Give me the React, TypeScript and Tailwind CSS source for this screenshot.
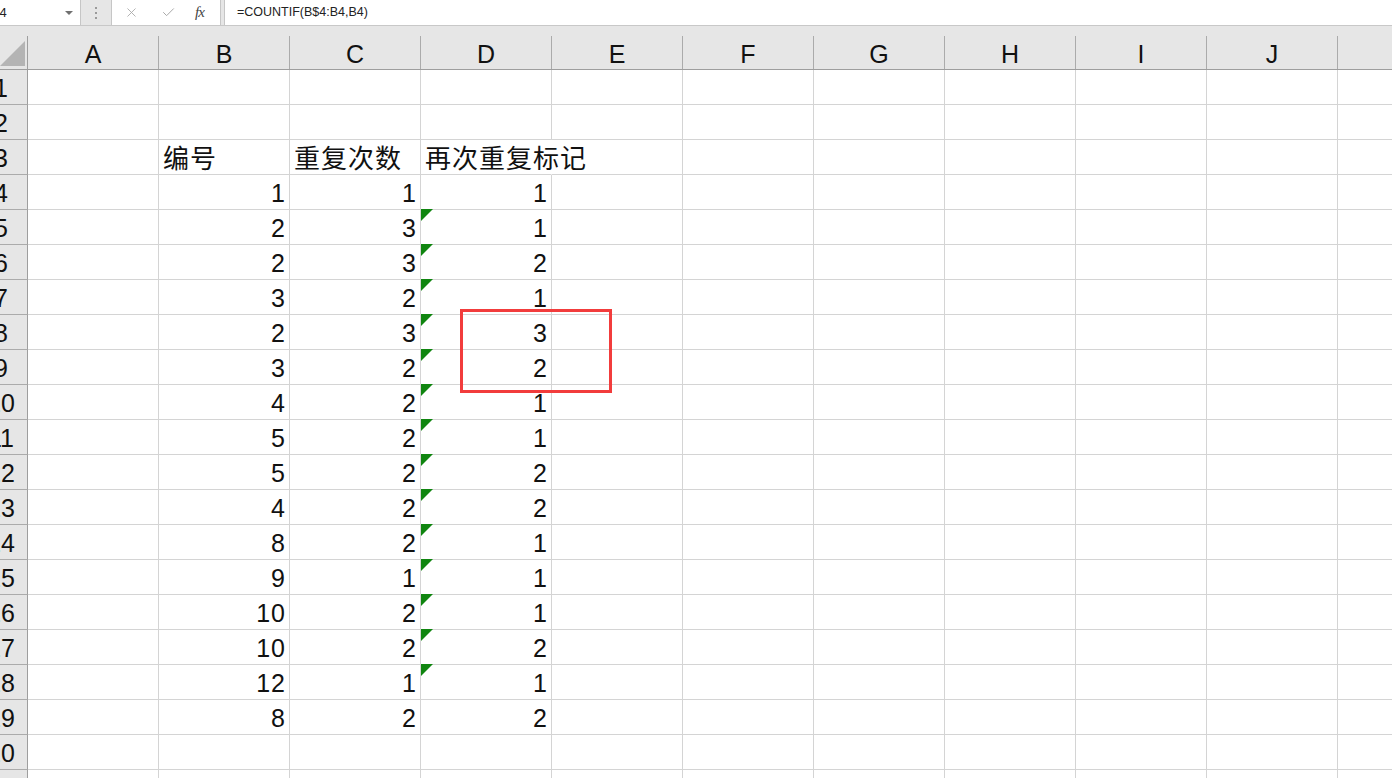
import { Check, X } from "lucide-react";

const COLS = ["A", "B", "C", "D", "E", "F", "G", "H", "I", "J", "K"];

// rows 4..19: 编号, 重复次数, 再次重复标记
const DATA: [number, number, number][] = [
  [1, 1, 1],
  [2, 3, 1],
  [2, 3, 2],
  [3, 2, 1],
  [2, 3, 3],
  [3, 2, 2],
  [4, 2, 1],
  [5, 2, 1],
  [5, 2, 2],
  [4, 2, 2],
  [8, 2, 1],
  [9, 1, 1],
  [10, 2, 1],
  [10, 2, 2],
  [12, 1, 1],
  [8, 2, 2],
];

const ROWS = Array.from({ length: 21 }, (_, i) => i + 1);

const NUM = "font-['Liberation_Sans',Arial,sans-serif] text-[25px] leading-none text-[#111]";
const CJK =
  "font-['Noto_Sans_CJK_SC','Liberation_Sans',sans-serif] text-[26px] leading-none tracking-[1px] text-[#111]";

function cellValue(row: number, col: number): { text: string; cjk?: boolean } | null {
  if (row === 3) {
    if (col === 1) return { text: "编号", cjk: true };
    if (col === 2) return { text: "重复次数", cjk: true };
    if (col === 3) return { text: "再次重复标记", cjk: true };
    return null;
  }
  if (row >= 4 && row <= 19 && col >= 1 && col <= 3) {
    return { text: String(DATA[row - 4][col - 1]) };
  }
  return null;
}

function FormulaBar() {
  return (
    <div className="flex h-[26px] bg-[#e6e6e6] border-b border-[#c8c8c8] font-['Liberation_Sans',Arial,sans-serif]">
      <div className="w-[81px] bg-white border-r border-[#c6c6c6] flex items-center overflow-hidden">
        <span className="-ml-[10px] text-[13px] text-[#222]">D4</span>
        <span className="ml-auto mr-[7px] w-0 h-0 border-l-[4px] border-r-[4px] border-t-[4px] border-l-transparent border-r-transparent border-t-[#707070]" />
      </div>
      <div className="w-[30px] flex flex-col items-center justify-center gap-[3px]">
        <span className="w-[2px] h-[2px] bg-[#9a9a9a]" />
        <span className="w-[2px] h-[2px] bg-[#9a9a9a]" />
        <span className="w-[2px] h-[2px] bg-[#9a9a9a]" />
      </div>
      <div className="w-[110px] bg-white border-x border-[#c6c6c6] flex items-center">
        <X className="ml-[12px] text-[#a8a8a8]" size={15} strokeWidth={1.4} />
        <Check className="ml-[22px] text-[#a8a8a8]" size={15} strokeWidth={1.6} />
        <span className="ml-[19px] font-['Liberation_Serif',serif] italic text-[15px] text-[#444] tracking-[-1px]">fx</span>
      </div>
      <div className="w-[3px]" />
      <div className="flex-1 bg-white border-l border-[#c6c6c6] flex items-center pl-[12px] text-[12.5px] text-[#222]">
        =COUNTIF(B$4:B4,B4)
      </div>
    </div>
  );
}

function ColumnHeader() {
  return (
    <div className="flex h-[44px] bg-[#e6e6e6] border-b border-[#9e9e9e]">
      <div className="w-[28px] shrink-0 h-full pt-[10px] relative">
        <div className="h-full border-r border-[#9e9e9e]" />
        <div className="absolute right-[3px] bottom-[3px] w-[25px] h-[25px] bg-[#b4b4b4] [clip-path:polygon(100%_0,100%_100%,0_100%)]" />
      </div>
      {COLS.map((c) => (
        <div key={c} className="w-[131px] shrink-0 h-full pt-[10px]">
          <div className={`h-full border-r border-[#ababab] flex items-end justify-center pb-[2px] ${NUM}`}>{c}</div>
        </div>
      ))}
    </div>
  );
}

export default function App() {
  return (
    <div className="w-[1392px] h-[778px] overflow-hidden bg-white relative">
      <FormulaBar />
      <ColumnHeader />
      <div className="grid grid-cols-[28px_repeat(11,131px)] auto-rows-[35px]">
        {ROWS.map((r) => (
          <div key={r} className="contents">
            <div className="bg-[#e6e6e6] border-r border-b border-r-[#9e9e9e] border-b-[#ababab] overflow-hidden flex items-end pb-[3px]">
              <span className={`w-[50px] -ml-[24px] shrink-0 text-center ${NUM}`}>{r}</span>
            </div>
            {COLS.map((c, ci) => {
              const v = cellValue(r, ci);
              const overflowD3 = r === 3 && ci === 3;
              const flag = ci === 3 && r >= 5 && r <= 18;
              return (
                <div
                  key={c}
                  className={`relative flex items-end border-b border-r border-[#d4d4d4] ${
                    overflowD3 ? "border-r-transparent z-10" : ""
                  } ${v && !v.cjk ? "justify-end pr-[3px] pb-[3px]" : "pl-[4px] pb-[4px]"}`}
                >
                  {flag && (
                    <div className="absolute left-0 -top-px w-[12px] h-[12px] bg-[#108510] [clip-path:polygon(0_0,100%_0,0_100%)]" />
                  )}
                  {v && (
                    <span className={`whitespace-nowrap ${v.cjk ? CJK : `${NUM} tracking-[1px]`}`}>{v.text}</span>
                  )}
                </div>
              );
            })}
          </div>
        ))}
      </div>
      <div className="absolute left-[460px] top-[309px] w-[152px] h-[84px] border-[3px] border-[#f23c3c] pointer-events-none" />
    </div>
  );
}
